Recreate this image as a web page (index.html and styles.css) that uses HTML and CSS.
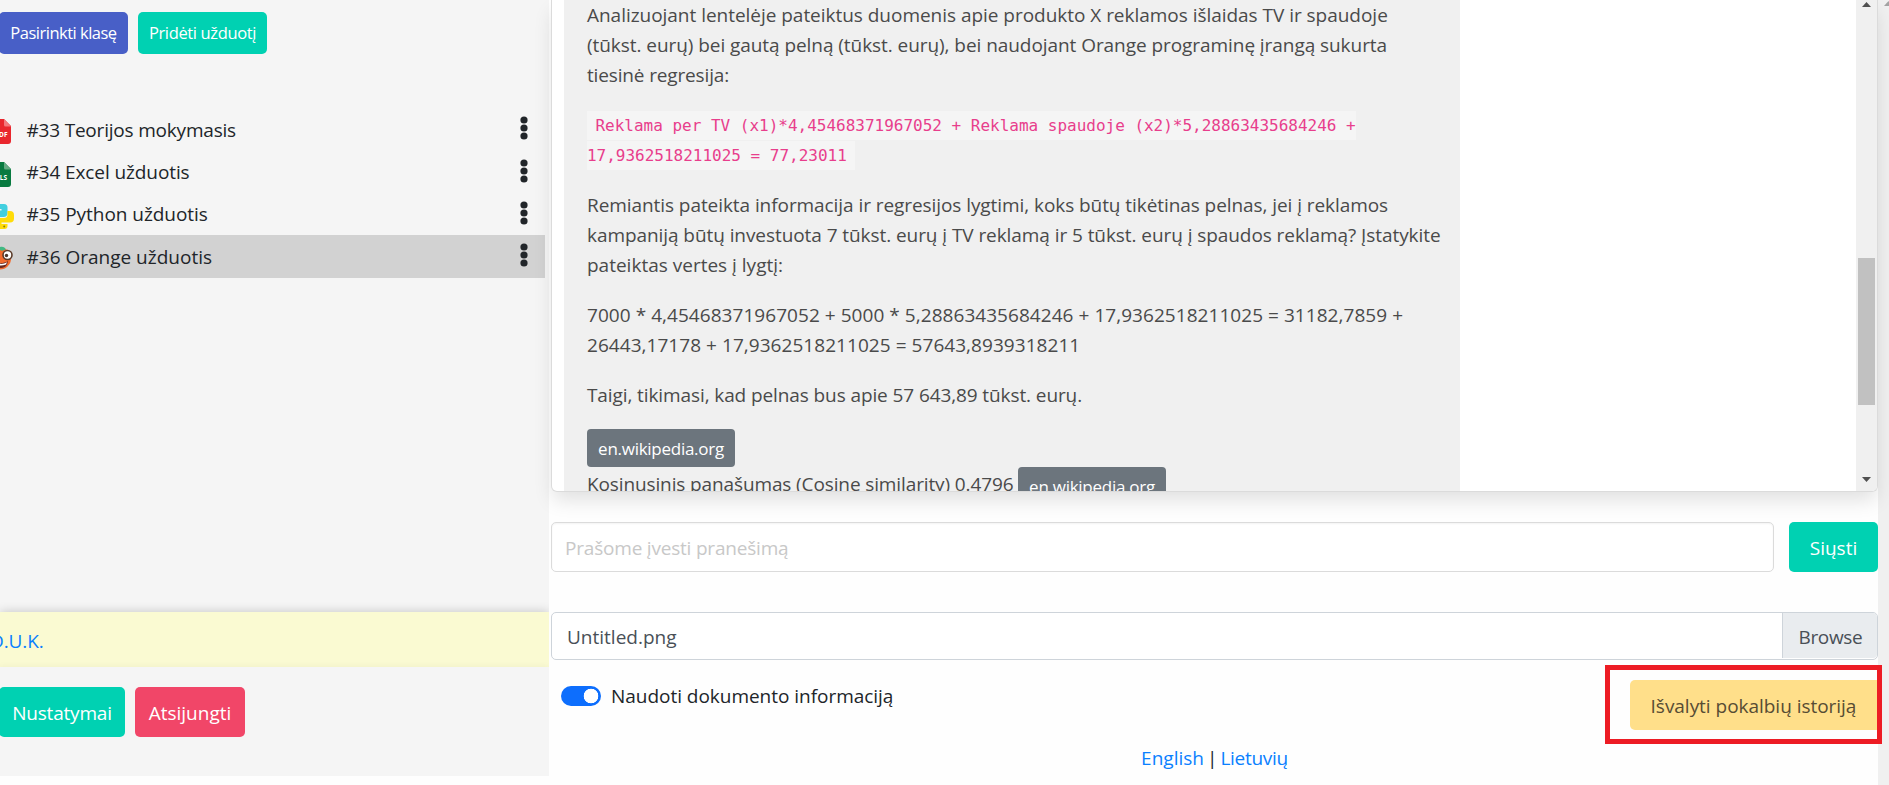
FILE: index.html
```html
<!DOCTYPE html>
<html lang="lt">
<head>
<meta charset="utf-8">
<title>Užduotys</title>
<link rel="stylesheet" href="styles.css">
</head>
<body>
<div class="page">
  <aside class="sidebar">
    <div class="actions">
      <button class="btn btn-small btn-link">Pasirinkti klasę</button>
      <button class="btn btn-small btn-primary t-10">Pridėti užduotį</button>
    </div>
    <ul class="tasks">
      <li class="task">
        <svg class="task-icon" viewBox="0 0 25 26"><path d="M4 0h11l7 7v15a3 3 0 0 1-3 3H4a3 3 0 0 1-3-3V3a3 3 0 0 1 3-3z" fill="#e9262d"/><path d="M15 0l7 7.500h-5.500a1.500 1.500 0 0 1-1.500-1.500z" fill="#f3797d"/><text x="6" y="18" class="icon-label">PDF</text></svg>
        <span class="task-name t-20">#33 Teorijos mokymasis</span>
        <svg class="dots" viewBox="0 0 8 24"><circle cx="4" cy="4" r="3.600"/><circle cx="4" cy="12" r="3.600"/><circle cx="4" cy="20" r="3.600"/></svg>
      </li>
      <li class="task">
        <svg class="task-icon" viewBox="0 0 25 26"><path d="M4 0h11l7 7v15a3 3 0 0 1-3 3H4a3 3 0 0 1-3-3V3a3 3 0 0 1 3-3z" fill="#087a40"/><path d="M15 0l7 7.500h-5.500a1.500 1.500 0 0 1-1.500-1.500z" fill="#67ab84"/><text x="6.500" y="18" class="icon-label">XLS</text></svg>
        <span class="task-name t-10">#34 Excel užduotis</span>
        <svg class="dots" viewBox="0 0 8 24"><circle cx="4" cy="4" r="3.600"/><circle cx="4" cy="12" r="3.600"/><circle cx="4" cy="20" r="3.600"/></svg>
      </li>
      <li class="task">
        <svg class="task-icon" viewBox="0 0 25 26"><path d="M9 0h6a3.500 3.500 0 0 1 3.500 3.500V9a4 4 0 0 1-4 4H9a4 4 0 0 0-4 4v1.500H4A4 4 0 0 1 0 14v-3.500a4 4 0 0 1 4-4h8.500V5H6V3a3 3 0 0 1 3-3z" fill="#42cfdf"/><path d="M18.500 7H21a4 4 0 0 1 4 4v3.500a4 4 0 0 1-4 4h-8.500V20h6v2a3 3 0 0 1-3 3H10a3.500 3.500 0 0 1-3.500-3.500V17a3 3 0 0 1 3-3h5.500a3.500 3.500 0 0 0 3.500-3.500z" fill="#ffdc0a"/><circle cx="15.200" cy="22.500" r="1" fill="#8a7a18"/><circle cx="9" cy="2.800" r="1" fill="#fff"/></svg>
        <span class="task-name t-5">#35 Python užduotis</span>
        <svg class="dots" viewBox="0 0 8 24"><circle cx="4" cy="4" r="3.600"/><circle cx="4" cy="12" r="3.600"/><circle cx="4" cy="20" r="3.600"/></svg>
      </li>
      <li class="task task-active">
        <svg class="task-icon" viewBox="0 0 25 26"><circle cx="11" cy="12.500" r="11" fill="#f26a2c"/><path d="M2 5C5 0 8 3 11 1c3-.800 5 .500 6 2.500l-4 1.200-3-1.200-3 2z" fill="#42b983"/><path d="M4 14c5 4 10 4 15 1-1 6-4 7-8 7s-6-4-7-8z" fill="#6b2a20"/><path d="M6 16c4 2.500 8 2.500 12 .300l-1 2.200c-4 1.500-7 1.200-10 0z" fill="#fff"/><circle cx="6" cy="9" r="4" fill="#fff" stroke="#5a3a28" stroke-width="1.500"/><circle cx="18.500" cy="9" r="4.500" fill="#fff" stroke="#5a3a28" stroke-width="1.600"/><circle cx="17.500" cy="9.500" r="1.700" fill="#4a352c"/><circle cx="7" cy="9" r="1.500" fill="#4a352c"/></svg>
        <span class="task-name">#36 Orange užduotis</span>
        <svg class="dots" viewBox="0 0 8 24"><circle cx="4" cy="4" r="3.600"/><circle cx="4" cy="12" r="3.600"/><circle cx="4" cy="20" r="3.600"/></svg>
      </li>
    </ul>
    <div class="faq"><a href="#">D.U.K.</a></div>
    <div class="account">
      <button class="btn btn-primary btn-settings">Nustatymai</button>
      <button class="btn btn-danger">Atsijungti</button>
    </div>
  </aside>

  <main class="main">
    <section class="chat">
      <div class="chat-body">
        <div class="message">
          <p><span class="t-3">Analizuojant lentelėje pateiktus duomenis apie produkto X reklamos išlaidas TV ir spaudoje</span><br><span class="t-6">(tūkst. eurų) bei gautą pelną (tūkst. eurų), bei naudojant Orange programinę įrangą sukurta</span><br><span class="t-15">tiesinė regresija:</span></p>
          <p class="formula"><code><span class="code-line lead">Reklama per TV (x1)*4,45468371967052 + Reklama spaudoje (x2)*5,28863435684246 +</span></code><code><span class="code-line tail">17,9362518211025 = 77,23011</span></code></p>
          <p><span class="t-7">Remiantis pateikta informacija ir regresijos lygtimi, koks būtų tikėtinas pelnas, jei į reklamos</span><br><span class="t-7">kampaniją būtų investuota 7 tūkst. eurų į TV reklamą ir 5 tūkst. eurų į spaudos reklamą? Įstatykite</span><br><span>pateiktas vertes į lygtį:</span></p>
          <p><span class="t-plus">7000 * 4,45468371967052 + 5000 * 5,28863435684246 + 17,9362518211025 = 31182,7859 +</span><br><span class="t-plus">26443,17178 + 17,9362518211025 = 57643,8939318211</span></p>
          <p class="t-10">Taigi, tikimasi, kad pelnas bus apie 57 643,89 tūkst. eurų.</p>
          <div class="sources">
            <div class="source"><a class="badge" href="#">en.wikipedia.org</a></div>
            <div class="source"><span class="similarity t-12">Kosinusinis panašumas (Cosine similarity) 0.4796</span><a class="badge" href="#">en.wikipedia.org</a></div>
          </div>
        </div>
      </div>
      <div class="scroll">
        <svg class="arrow" viewBox="0 0 9 5"><path d="M0 5L4.500 0 9 5z"/></svg>
        <div class="thumb"></div>
        <svg class="arrow arrow-down" viewBox="0 0 9 5"><path d="M0 0h9L4.500 5z"/></svg>
      </div>
    </section>

    <form class="compose">
      <input class="field t-20" type="text" placeholder="Prašome įvesti pranešimą">
      <button type="button" class="btn btn-primary btn-send">Siųsti</button>
    </form>

    <div class="file">
      <span class="file-name">Untitled.png</span>
      <span class="file-browse">Browse</span>
    </div>

    <div class="options">
      <div class="switch-row"><span class="switch"></span><span class="t-3">Naudoti dokumento informaciją</span></div>
      <div class="clear"><button class="btn btn-warning t-3">Išvalyti pokalbių istoriją</button></div>
    </div>

    <div class="langs"><a href="#">English</a><span>|</span><a class="t-28" href="#">Lietuvių</a></div>
  </main>

  <div class="page-scroll"><svg class="page-arrow" viewBox="0 0 9 5"><path d="M0 5L4.500 0 9 5z"/></svg></div>
</div>
</body>
</html>
```
FILE: styles.css
```css
* { box-sizing: border-box; }
body {
  margin: 0;
  height: 785px;
  overflow: hidden;
  background: #fefefe;
  color: #212529;
  font: 19px/30px "Open Sans", "Noto Sans", sans-serif;
}
a { color: #0a80ff; text-decoration: none; }
p { margin: 0 0 20px; }

.page { display: flex; height: 785px; }

/* letter spacing steps */
.t-3 { letter-spacing: -.03px; }
.t-5 { letter-spacing: -.05px; }
.t-6 { letter-spacing: -.06px; }
.t-7 { letter-spacing: -.07px; }
.t-10 { letter-spacing: -.1px; }
.t-12 { letter-spacing: -.12px; }
.t-15 { letter-spacing: -.15px; }
.t-20 { letter-spacing: -.2px; }
.t-28 { letter-spacing: -.28px; }
.t-plus { letter-spacing: .05px; }

/* buttons */
.btn {
  height: 50px;
  padding: 1px 13px 0;
  border: 0;
  border-radius: 5px;
  color: #fff;
  font: inherit;
  white-space: nowrap;
}
.btn-small { width: 129px; height: 42px; padding: 0; font-size: 16.5px; letter-spacing: -.5px; }
.btn-small.t-10 { letter-spacing: -.36px; }
.btn-link { background: #485fc7; }
.btn-primary { background: #00d1b2; }
.btn-danger { width: 110px; background: #f14668; }
.btn-settings { width: 126px; letter-spacing: -.2px; }
.btn-send { width: 89px; }
.btn-warning { padding: 1px 0 0; background: #ffdf8a; color: #574c34; }

/* sidebar */
.sidebar {
  display: flex;
  flex-direction: column;
  flex: none;
  width: 549px;
  height: 776px;
  overflow: hidden;
  background: #f5f5f5;
}
.actions { display: flex; gap: 10px; padding-top: 12px; margin-left: -1px; }
.tasks { margin: 54px 0 0; padding: 0; width: 545px; list-style: none; }
.task { display: flex; align-items: center; height: 42.4px; padding-right: 17px; }
.task-active { background: #d2d2d2; }
.task-icon { flex: none; width: 25px; height: 26px; margin: 6px 0 0 -11px; }
.icon-label { font: bold 6.5px "Open Sans", sans-serif; fill: #fff; }
.task-name { flex: 1; margin-left: 12.5px; padding-top: 1px; }
.dots { width: 8px; height: 24px; margin-top: -2px; fill: #212529; }
.faq {
  height: 55px;
  margin-top: auto;
  padding: 14px 0 0;
  background: #fafad2;
  box-shadow: 0 0 10px rgba(0, 0, 0, .2);
}
.faq a { display: block; margin-left: -10px; letter-spacing: -.1px; }
.account { display: flex; gap: 10px; padding: 20px 0 39px; margin-left: -1px; background: #f5f5f5; box-shadow: 0 -1px 6px rgba(0, 0, 0, .04); }

/* main column */
.main { position: relative; flex: 1; padding-left: 2px; }
.chat {
  display: flex;
  height: 492px;
  overflow: hidden;
  border: 1px solid #dbdbdb;
  border-top: 0;
  border-radius: 0 0 6px 6px;
  background: #fff;
  box-shadow: 0 10px 20px -2px rgba(10, 10, 10, .12);
}
.chat-body { flex: 1; padding-left: 12px; }
.message { width: 896px; height: 491px; overflow: hidden; padding-left: 23px; background: #f0f0f0; color: #4a4a4a; white-space: nowrap; }
.formula { display: flex; flex-direction: column; align-items: flex-start; gap: 1px; padding-top: 1px; }
code { height: 29px; background: #f5f5f5; color: #e83e8c; font: 16px/29px "DejaVu Sans Mono", monospace; }
.code-line { display: block; letter-spacing: -.01px; }
.lead { padding-left: 8.5px; }
.tail { padding-right: 8px; }
.sources { margin-top: -1px; }
.source { display: flex; height: 38px; }
.similarity { width: 431px; padding-top: 2px; }
.badge {
  width: 148px;
  height: 38px;
  border-radius: 4px;
  background: #6c757d;
  color: #fff;
  font-size: 17px;
  line-height: 39px;
  letter-spacing: -.27px;
  text-align: center;
}
.scroll { display: flex; flex-direction: column; align-items: center; width: 21px; padding: 2px 0 9px; background: #f0f0f0; }
.arrow { width: 9px; height: 5px; fill: #505050; }
.thumb { width: 17px; height: 147px; margin-top: 251px; background: #c1c1c1; }
.arrow-down { margin-top: auto; }

.compose { display: flex; gap: 15px; margin-top: 30px; }
.field {
  flex: 1;
  height: 50px;
  padding: 2px 13px 0;
  border: 1px solid #dbdbdb;
  border-radius: 5px;
  background: #fff;
  box-shadow: inset 0 1px 2px rgba(10, 10, 10, .05);
  font: inherit;
}
.field::placeholder { color: #c8c8c8; opacity: 1; }

.file {
  display: flex;
  height: 48px;
  margin-top: 40px;
  border: 1px solid #ced4da;
  border-radius: 5px;
  background: #fff;
  color: #495057;
}
.file-name { flex: 1; padding: 9px 15px 0; }
.file-browse { width: 95px; height: 45px; padding: 9px 0 0 15.5px; border-left: 1px solid #ced4da; border-radius: 0 4px 4px 0; background: #e9ecef; letter-spacing: -.35px; }

.options { display: flex; justify-content: space-between; align-items: flex-start; height: 83px; }
.switch-row { display: flex; align-items: center; gap: 10px; padding: 20.5px 0 0 10px; }
.switch {
  width: 40px;
  height: 20px;
  border-radius: 10px;
  background: radial-gradient(circle at 30px 10px, #fff 7px, #0d6efd 7.6px);
}
.clear {
  flex: none;
  width: 277px;
  height: 79px;
  margin: 5px -4px 0 0;
  padding: 10px 0 0 20px;
  position: relative;
  z-index: 2;
  border: 5px solid #ed1c24;
}
.clear .btn { width: 247px; border-radius: 5px 0 0 5px; }
.langs { display: flex; justify-content: center; gap: 3px; }

.page-scroll { flex: none; width: 11px; overflow: hidden; background: #f0f0f0; }
.page-arrow { display: block; width: 9px; height: 5px; margin: 1px 0 0 6px; fill: #a3a3a3; }
```
